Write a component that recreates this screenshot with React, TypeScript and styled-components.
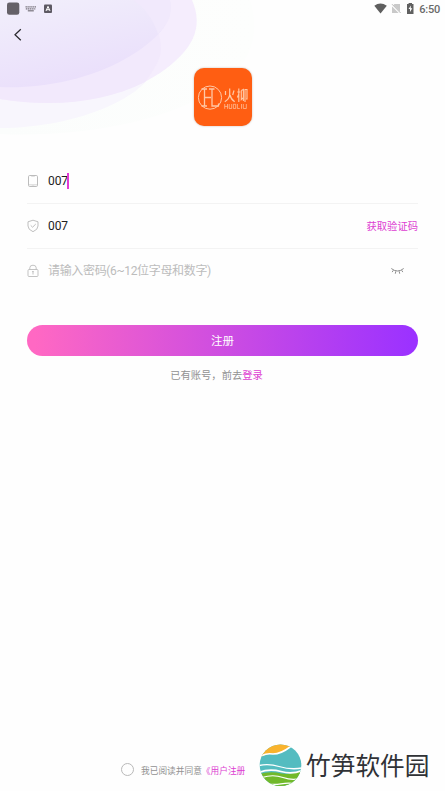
import React from 'react';
import styled, { createGlobalStyle } from 'styled-components';

const GlobalStyle = createGlobalStyle`
  * { box-sizing: border-box; }
  body { margin: 0; background: #fff; }
  button, input { font-family: inherit; }
`;

const Screen = styled.main`
  position: relative;
  width: 445px;
  height: 791px;
  overflow: hidden;
  display: flex;
  flex-direction: column;
  background: #fefefe;
  font-family: Roboto, 'Noto Sans CJK SC', sans-serif;
`;

const Backdrop = styled.svg`
  position: absolute;
  top: 0;
  left: 0;
  z-index: 0;
`;

const StatusBar = styled.header`
  z-index: 1;
  display: flex;
  justify-content: space-between;
  align-items: center;
  height: 18px;
  padding: 0 5px 0 7px;
`;

const StatusGroup = styled.div`
  display: flex;
  align-items: center;
  height: 18px;
`;

const Clock = styled.span`
  margin-left: 5px;
  padding-top: 1px;
  font-size: 11px;
  line-height: 18px;
  font-weight: 500;
  letter-spacing: -0.2px;
  color: #6a6a6a;
`;

const NavBar = styled.nav`
  z-index: 1;
  display: flex;
  align-items: center;
  height: 33px;
  padding-left: 13px;
`;

const BackButton = styled.button`
  display: flex;
  padding: 0;
  border: 0;
  background: none;
`;

const Brand = styled.div`
  z-index: 1;
  display: flex;
  width: 58px;
  height: 58px;
  margin: 17px 0 0 194px;
  border-radius: 10px;
  background: #ff5e12;
  box-shadow: 0 0 2px rgba(130, 80, 50, 0.45);
`;

const Form = styled.form`
  z-index: 1;
  display: flex;
  flex-direction: column;
  margin: 33px 27px 0;
`;

const Field = styled.div<{ $last?: boolean }>`
  display: flex;
  align-items: center;
  height: 45px;
  padding-bottom: 1px;
  border-bottom: 1px solid ${(p) => (p.$last ? 'transparent' : '#f3f3f3')};
`;

const FieldIcon = styled.span`
  display: flex;
  width: 21px;
`;

const FieldText = styled.span<{ $hint?: boolean }>`
  font-size: 12px;
  line-height: 16px;
  letter-spacing: ${(p) => (p.$hint ? '-0.34px' : '-0.1px')};
  color: ${(p) => (p.$hint ? '#bcbcbc' : '#222')};
`;

const Caret = styled.i`
  width: 2px;
  height: 16px;
  margin-left: -1px;
  background: #e23bd6;
`;

const CodeLink = styled.button`
  margin-left: auto;
  padding: 2px 0 0;
  border: 0;
  background: none;
  font-size: 10.3px;
  line-height: 16px;
  color: #dd3fd2;
`;

const RevealButton = styled.button`
  display: flex;
  margin: 0 14px 0 auto;
  padding: 0;
  border: 0;
  background: none;
`;

const SubmitButton = styled.button`
  height: 31px;
  margin-top: 31px;
  padding: 1px 0 0;
  border: 0;
  border-radius: 16px;
  background: linear-gradient(90deg, #ff68c3 2%, #9c32ff 98%);
  font-size: 11.5px;
  line-height: 30px;
  color: #fff;
`;

const LoginHint = styled.p`
  margin: 12px 12px 0 0;
  text-align: center;
  font-size: 10.3px;
  line-height: 16px;
  color: #929292;
`;

const Accent = styled.span`
  color: #dd3fd2;
`;

const Footer = styled.footer`
  z-index: 1;
  display: flex;
  align-items: center;
  height: 48px;
  margin: auto 0 2px 121px;
`;

const Radio = styled.span`
  width: 13px;
  height: 13px;
  margin-top: 8px;
  border: 1px solid #b9b9b9;
  border-radius: 50%;
`;

const Agreement = styled.span`
  width: 104px;
  margin: 11px 0 0 7px;
  white-space: nowrap;
  font-size: 8.7px;
  line-height: 14px;
  color: #929292;
`;

const SiteMark = styled.div`
  display: flex;
  align-items: center;
  gap: 4px;
  margin-left: 14px;
`;

const SiteName = styled.span`
  padding-top: 3px;
  white-space: nowrap;
  font-size: 24.7px;
  line-height: 36px;
  color: #303236;
`;

const App: React.FC = () => (
  <>
    <GlobalStyle />
    <Screen>
      <Backdrop width="270" height="145" viewBox="0 0 270 145">
        <defs>
          <linearGradient id="veil" x1="0.2" y1="0" x2="0.65" y2="1">
            <stop offset="0" stopColor="#f1eefb" />
            <stop offset="1" stopColor="#e9ddfb" />
          </linearGradient>
          <linearGradient id="mint" x1="0" y1="0" x2="1" y2="0">
            <stop offset="0" stopColor="#fbfdfc" />
            <stop offset="1" stopColor="#fdfefd" />
          </linearGradient>
        </defs>
        <path d="M0 0H250C262 37 250 70 207 94C151 127 65 137 0 134Z" fill="url(#mint)" />
        <path d="M0 0H133C151 13 161 30 161 49C160 97 75 128 0 128Z" fill="#f8f6fd" />
        <path d="M0 0H192C204 28 193 50 160 73C119 100 58 109 0 99Z" fill="#f5edfd" />
        <path d="M0 0H133C151 13 161 30 161 49C161 58 156 67 145 82C105 102 55 108 0 99Z" fill="#f2e9fc" />
        <path d="M0 0H170C174 22 158 40 125 59C88 80 40 89 0 87Z" fill="url(#veil)" />
        <path d="M133 0H170C173 15 168 24 158 34C154 21 146 9 133 0Z" fill="#f1e9fc" />
      </Backdrop>

      <StatusBar>
        <StatusGroup>
          <svg width="46" height="18" viewBox="0 0 46 18">
            <rect x="0" y="2.5" width="12.3" height="12.3" rx="2.3" fill="#656168" />
            <path d="M18.5 6.8H29M18.8 8.8H28.6" stroke="#77737c" strokeWidth="1.3" strokeDasharray="1.4 .5" />
            <path d="M20.8 10.8H26.8" stroke="#77737c" strokeWidth="1.2" />
            <rect x="37" y="4.5" width="8" height="8.5" rx="1" fill="#5d5963" />
            <path d="M39 11L41 6.3L43 11M39.7 9.7H42.3" fill="none" stroke="#fff" strokeWidth="1" />
          </svg>
        </StatusGroup>
        <StatusGroup>
          <svg width="40" height="18" viewBox="0 0 40 18">
            <path d="M.3 5.8Q6.5 1.2 12.8 5.8L6.5 13.5Z" fill="#5f5f5f" />
            <path d="M20.5 4H26V13H18V6.5Z" fill="#c9c9c9" />
            <path d="M17.5 4.5L26.5 13.5" stroke="#fff" strokeWidth="1.8" />
            <path d="M18 4.2L26.6 13" stroke="#a5a5a5" strokeWidth=".8" />
            <path d="M33 4H34.6V3H38V4H39.5V14H33Z" fill="#606060" />
            <path d="M37 5.5L34.5 9H36V12L38.3 8.3H36.7Z" fill="#fff" />
          </svg>
          <Clock>6:50</Clock>
        </StatusGroup>
      </StatusBar>

      <NavBar>
        <BackButton type="button" aria-label="返回">
          <svg width="10" height="14" viewBox="0 0 10 14">
            <path d="M7.8 1.2L2 6.7L7.8 12.2" fill="none" stroke="#2a292e" strokeWidth="1.25" />
          </svg>
        </BackButton>
      </NavBar>

      <Brand>
        <svg width="58" height="58" viewBox="0 0 58 58">
          <g fill="none" stroke="#ffc8a6">
            <circle cx="16" cy="29.6" r="11.6" strokeWidth="1" />
            <path d="M10.5 20.5V38.5M7.5 21H13M7.5 38H13M11 29.5H17M18 21V38H25M15 21H20.5M24.5 35.5V38" strokeWidth="1.3" />
            <path d="M35.7 20.5V26Q35.5 31 30.8 33.7M36 27Q37 31.5 40.7 33.7M31.5 23V27M40 22.5L38.7 27" strokeWidth="1.2" />
            <path d="M44.8 20.5V34M43.2 24H46.2M43.4 29.5L44.8 26M47.3 22.5V31.5L48.8 30M47.3 22.5L49.4 21.5V33M51 34V21.5H53V31H52" strokeWidth="1.15" />
            <path d="M30.7 36V40.8M33.5 36V40.8M30.7 38.4H33.5M35.2 36V40.5H37.7V36M39.4 36.3H41.7V40.5H39.4ZM43.4 36V40.5H45.8M47.5 36V40.8M49.3 36V40.5H52.3V36" strokeWidth=".7" />
          </g>
        </svg>
      </Brand>

      <Form>
        <Field>
          <FieldIcon>
            <svg width="13" height="14" viewBox="0 0 13 14" fill="none" stroke="#bcbcbc">
              <rect x="1.5" y="1.5" width="9" height="11" rx="1.2" />
              <path d="M4.2 2.2H7.8M2 10.8H10M4.8 12H7.2" strokeWidth=".6" />
            </svg>
          </FieldIcon>
          <FieldText>007</FieldText>
          <Caret />
        </Field>
        <Field>
          <FieldIcon>
            <svg width="13" height="14" viewBox="0 0 13 14" fill="none" stroke="#b8b8b8" strokeWidth=".9">
              <path d="M6 1.2L11 2.8V7Q11 10.6 6 12.7Q1 10.6 1 7V2.8Z" strokeLinejoin="round" />
              <path d="M3.7 6.4L5.6 8.2L8.8 5" />
            </svg>
          </FieldIcon>
          <FieldText>007</FieldText>
          <CodeLink type="button">获取验证码</CodeLink>
        </Field>
        <Field $last>
          <FieldIcon>
            <svg width="13" height="14" viewBox="0 0 13 14" fill="none" stroke="#bcbcbc" strokeWidth=".9">
              <rect x="1" y="5.5" width="10" height="7" rx="1" />
              <path d="M2.8 5.5V3.8Q2.8 1.2 6 1.2Q9.2 1.2 9.2 3.8V5.5M5 7.6H6.8M6 7.5V10.5" />
            </svg>
          </FieldIcon>
          <FieldText $hint>请输入密码(6~12位字母和数字)</FieldText>
          <RevealButton type="button" aria-label="显示密码">
            <svg width="13" height="8" viewBox="0 0 13 8">
              <path d="M.3 1.5Q6.5 6.5 12.7 1.5M2.3 3.3L1.2 5.1M4.8 4.3L4.3 6.7M8.2 4.3L8.7 6.7M10.7 3.3L11.8 5.1" fill="none" stroke="#777" strokeWidth=".85" />
            </svg>
          </RevealButton>
        </Field>
        <SubmitButton type="button">注册</SubmitButton>
        <LoginHint>已有账号，前去<Accent>登录</Accent></LoginHint>
      </Form>

      <Footer>
        <Radio />
        <Agreement>我已阅读并同意<Accent>《用户注册</Accent></Agreement>
        <SiteMark>
          <svg width="43" height="43" viewBox="0 0 43 43">
            <defs>
              <clipPath id="disc"><circle cx="21.5" cy="21.2" r="20.8" /></clipPath>
            </defs>
            <g clipPath="url(#disc)">
              <rect width="43" height="43" fill="#54bcc0" />
              <path d="M0 0H43V2L31 3Q24 9 15 9.5Q8 9 4 12L0 13Z" fill="#f9b32d" />
              <path d="M3 11.5Q8 9 14 10Q22 10 31 3L36 2" fill="none" stroke="#fff" strokeWidth="1.6" />
              <path d="M0 30Q12 27 22 29.5Q33 31 43 27V43H0Z" fill="#71b92b" />
              <path d="M0 21.5Q10 19.5 20 22.5Q32 26 43 24" fill="none" stroke="#fff" strokeWidth="1.3" />
              <path d="M0 28.5Q10 24.5 22 27.5Q33 30.5 43 26.5" fill="none" stroke="#fff" strokeWidth="1.8" />
              <path d="M3 33.5Q14 30 24 33.5Q33 36.5 41 34.5" fill="none" stroke="#fff" strokeWidth="1.2" />
              <path d="M10 40Q15 41 22 39.8Q29 38.5 36 39.5" fill="none" stroke="#fff" strokeWidth="1.2" />
            </g>
          </svg>
          <SiteName>竹笋软件园</SiteName>
        </SiteMark>
      </Footer>
    </Screen>
  </>
);

export default App;
